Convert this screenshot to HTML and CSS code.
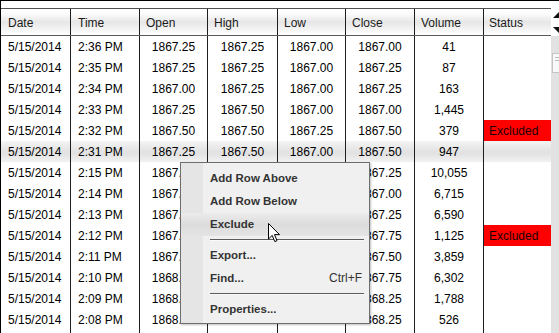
FILE: index.html
```
<!DOCTYPE html>
<html>
<head>
<meta charset="utf-8">
<link rel="stylesheet" href="styles.css">
</head>
<body>
<div class="frame">
  <div class="grid">
    <div class="row head">
      <div class="c l">Date</div><div class="c l">Time</div><div class="c h">Open</div><div class="c h">High</div><div class="c h">Low</div><div class="c h">Close</div><div class="c h">Volume</div><div class="c s">Status</div>
    </div>
    <div class="row"><div class="c l">5/15/2014</div><div class="c l">2:36 PM</div><div class="c m">1867.25</div><div class="c m">1867.25</div><div class="c m">1867.00</div><div class="c m">1867.00</div><div class="c m">41</div><div class="c s"></div></div>
    <div class="row"><div class="c l">5/15/2014</div><div class="c l">2:35 PM</div><div class="c m">1867.25</div><div class="c m">1867.25</div><div class="c m">1867.00</div><div class="c m">1867.25</div><div class="c m">87</div><div class="c s"></div></div>
    <div class="row"><div class="c l">5/15/2014</div><div class="c l">2:34 PM</div><div class="c m">1867.00</div><div class="c m">1867.25</div><div class="c m">1867.00</div><div class="c m">1867.25</div><div class="c m">163</div><div class="c s"></div></div>
    <div class="row"><div class="c l">5/15/2014</div><div class="c l">2:33 PM</div><div class="c m">1867.25</div><div class="c m">1867.50</div><div class="c m">1867.00</div><div class="c m">1867.00</div><div class="c m">1,445</div><div class="c s"></div></div>
    <div class="row"><div class="c l">5/15/2014</div><div class="c l">2:32 PM</div><div class="c m">1867.50</div><div class="c m">1867.50</div><div class="c m">1867.25</div><div class="c m">1867.50</div><div class="c m">379</div><div class="c s ex">Excluded</div></div>
    <div class="row sel"><div class="c l">5/15/2014</div><div class="c l">2:31 PM</div><div class="c m">1867.25</div><div class="c m">1867.50</div><div class="c m">1867.00</div><div class="c m">1867.50</div><div class="c m">947</div><div class="c s"></div></div>
    <div class="row"><div class="c l">5/15/2014</div><div class="c l">2:15 PM</div><div class="c m">1867.50</div><div class="c m">1867.50</div><div class="c m">1867.00</div><div class="c m">1867.25</div><div class="c m">10,055</div><div class="c s"></div></div>
    <div class="row"><div class="c l">5/15/2014</div><div class="c l">2:14 PM</div><div class="c m">1867.25</div><div class="c m">1867.25</div><div class="c m">1867.00</div><div class="c m">1867.00</div><div class="c m">6,715</div><div class="c s"></div></div>
    <div class="row"><div class="c l">5/15/2014</div><div class="c l">2:13 PM</div><div class="c m">1867.50</div><div class="c m">1867.50</div><div class="c m">1867.25</div><div class="c m">1867.25</div><div class="c m">6,590</div><div class="c s"></div></div>
    <div class="row"><div class="c l">5/15/2014</div><div class="c l">2:12 PM</div><div class="c m">1867.75</div><div class="c m">1867.75</div><div class="c m">1867.50</div><div class="c m">1867.75</div><div class="c m">1,125</div><div class="c s ex">Excluded</div></div>
    <div class="row"><div class="c l">5/15/2014</div><div class="c l">2:11 PM</div><div class="c m">1867.75</div><div class="c m">1867.75</div><div class="c m">1867.50</div><div class="c m">1867.50</div><div class="c m">3,859</div><div class="c s"></div></div>
    <div class="row"><div class="c l">5/15/2014</div><div class="c l">2:10 PM</div><div class="c m">1868.00</div><div class="c m">1868.00</div><div class="c m">1867.75</div><div class="c m">1867.75</div><div class="c m">6,302</div><div class="c s"></div></div>
    <div class="row"><div class="c l">5/15/2014</div><div class="c l">2:09 PM</div><div class="c m">1868.25</div><div class="c m">1868.25</div><div class="c m">1868.00</div><div class="c m">1868.25</div><div class="c m">1,788</div><div class="c s"></div></div>
    <div class="row"><div class="c l">5/15/2014</div><div class="c l">2:08 PM</div><div class="c m">1868.25</div><div class="c m">1868.25</div><div class="c m">1868.00</div><div class="c m">1868.25</div><div class="c m">526</div><div class="c s"></div></div>
    <div class="row"><div class="c l"></div><div class="c l"></div><div class="c m"></div><div class="c m"></div><div class="c m"></div><div class="c m"></div><div class="c m"></div><div class="c s"></div></div>
  </div>
  <div class="vscroll">
    <div class="vhead">
      <svg width="8" height="35" viewBox="0 0 8 35"><polygon points="2,17 8,11 14,17" fill="#111"/><polygon points="2,26 14,26 8,32" fill="#111"/></svg>
    </div>
    <div class="vtrack">
      <div class="thumb"><span class="grip"></span><span class="grip"></span></div>
    </div>
  </div>
</div>

<div class="menu">
  <div class="gutter"></div>
  <div class="items">
    <div class="item">Add Row Above</div>
    <div class="item">Add Row Below</div>
    <div class="item hover">Exclude</div>
    <div class="sep"></div>
    <div class="item">Export...</div>
    <div class="item"><span>Find...</span><span class="key">Ctrl+F</span></div>
    <div class="sep"></div>
    <div class="item">Properties...</div>
  </div>
</div>

<svg class="cursor" width="13" height="20" viewBox="0 0 13 20"><path d="M0.5,0.5 L0.5,16 L4.2,12.4 L6.8,18.6 L9,17.7 L6.5,11.6 L11.5,11.6 Z" fill="#fff" stroke="#000" stroke-width="1" stroke-linejoin="miter"/></svg>
</body>
</html>
```
FILE: styles.css
```
html, body {
  margin: 0;
  padding: 0;
  background: #fff;
  overflow: hidden;
}
body {
  width: 559px;
  height: 333px;
  position: relative;
  font-family: "Liberation Sans", Arial, sans-serif;
  font-size: 12px;
  color: #000;
}
.frame {
  display: flex;
  border-top: 1px solid #000;
  border-left: 1px solid #000;
  height: 332px;
  overflow: hidden;
}
.grid {
  width: 550px;
  padding-top: 7px;
  flex: none;
}
.row {
  display: grid;
  grid-template-columns: 70px 69px 68px 70px 68px 69px 69px 67px;
  height: 21px;
}
.c {
  box-sizing: border-box;
  border-right: 1px solid #1e1e1e;
  padding-top: 2px;
  line-height: 19px;
  white-space: nowrap;
  overflow: hidden;
}
.c.s { border-right: none; padding-left: 5px; }
.c.l { padding-left: 7px; }
.c.m { text-align: center; }
.c.h { padding-left: 6px; }
.row.head {
  height: 28px;
  box-sizing: border-box;
  border-top: 1px solid #505050;
  border-bottom: 1px solid #5a5a5a;
  background: linear-gradient(#ffffff 0%, #fbfbfb 20%, #e6e6e6 50%, #f2f2f2 75%, #ffffff 100%);
  color: #1a1a1a;
}
.row.head .c {
  padding-top: 2px;
  line-height: 24px;
}
.row.sel {
  background: linear-gradient(#f4f4f4 0%, #e4e4e4 45%, #e2e2e2 60%, #f2f2f2 100%);
}
.c.ex {
  background: #ff0000;
  color: #1a0000;
}
.vscroll {
  width: 8px;
  flex: none;
  display: flex;
  flex-direction: column;
}
.vhead {
  height: 35px;
  background: #fff;
}
.vhead svg { display: block; }
.vtrack {
  flex: 1;
  background: #e2e2e2;
  padding-top: 17px;
}
.thumb {
  margin-left: 1px;
  height: 20px;
  box-sizing: border-box;
  background: #f9f9f9;
  border: 1px solid #c4c4c4;
  border-right: none;
  padding: 3px 0 0 2px;
}
.grip {
  display: block;
  width: 4px;
  height: 1px;
  background: #bdbdbd;
  margin-bottom: 2px;
}
.menu {
  position: absolute;
  left: 180px;
  top: 162px;
  width: 190px;
  height: 162px;
  box-sizing: border-box;
  border: 1px solid #6e6e6e;
  background: #f0f0f0;
  box-shadow: 1px 1px 2px rgba(0,0,0,0.25);
  display: flex;
  color: #343434;
}
.gutter {
  position: absolute;
  left: 0;
  top: 0;
  bottom: 0;
  width: 22px;
  background: #e5e5e5;
}
.items {
  position: relative;
  flex: 1;
  padding-top: 4px;
  display: flex;
  flex-direction: column;
}
.item {
  height: 23px;
  line-height: 23px;
  padding-left: 29px;
  padding-right: 7px;
  font-weight: bold;
  font-size: 11.5px;
  display: flex;
  justify-content: space-between;
}
.item .key {
  font-weight: normal;
  font-size: 12px;
  color: #333;
}
.item.hover {
  background: linear-gradient(#ececec 0%, #dcdcdc 50%, #e4e4e4 100%);
}
.sep {
  height: 1px;
  margin: 3px 5px 3px 29px;
  background: #5c5c5c;
  border-bottom: 1px solid #fafafa;
}
.cursor {
  position: absolute;
  left: 268px;
  top: 223px;
}
```
